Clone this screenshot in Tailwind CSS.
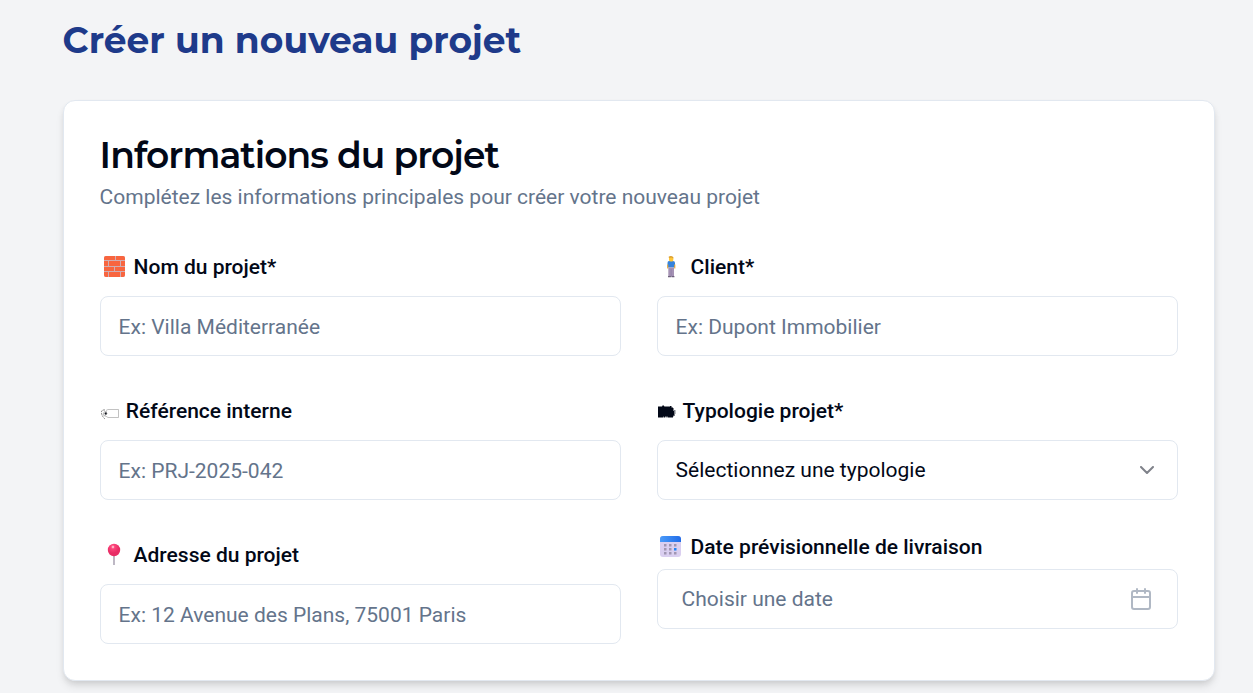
<!DOCTYPE html>
<html lang="fr">
<head>
<meta charset="utf-8">
<title>Créer un nouveau projet</title>
<script src="https://cdn.jsdelivr.net/npm/@tailwindcss/browser@4"></script>
</head>
<body class="h-[693px] overflow-hidden bg-[#f3f4f6] px-[62.6px] font-[Roboto,sans-serif] text-[21px] text-[#020817]">
<h1 class="pt-[13px] whitespace-nowrap font-[Montserrat,Inter,sans-serif] text-[36px] font-bold leading-[54px] text-[#1e3a8a]">Créer un nouveau projet</h1>
<main class="mt-[33px] h-[581px] w-[1152px] rounded-xl border border-[#e2e8f0] bg-white p-9 shadow-[0_6px_9px_-1px_rgba(0,0,0,0.1),0_3px_6px_-2px_rgba(0,0,0,0.1)]">
<h2 class="whitespace-nowrap font-[Montserrat,Inter,sans-serif] text-[36px] font-semibold leading-9 tracking-[-0.025em]">Informations du projet</h2>
<p class="mt-[9px] leading-[30px] text-[#64748b]">Complétez les informations principales pour créer votre nouveau projet</p>
<form class="mt-9 grid grid-cols-2 gap-9">
<div class="flex flex-col gap-3">
<label class="flex h-9 items-center font-medium"><svg class="ml-[3px] mr-2 size-[23px]" viewBox="0 0 23 23"><rect x="1" y="1" width="21" height="21" rx="2" fill="#d0adb2"/><g fill="#f8653f"><path d="M3 1h9v4H1V3q0-2 2-2M13 1h7q2 0 2 2v2h-9zM1 6h4v5H1zM6 6h11v5H6zM18 6h4v5h-4zM1 12h10v4H1zM12 12h10v4H12zM1 17h4v5H3q-2 0-2-2zM6 17h11v5H6zM18 17h4v3q0 2-2 2h-2z"/></g></svg><span class="pt-1">Nom du projet*</span></label>
<div class="flex h-[60px] items-center rounded-lg border border-[#e2e8f0] px-[18px] pt-1 text-[#64748b]">Ex: Villa Méditerranée</div>
</div>
<div class="flex flex-col gap-3">
<label class="flex h-9 items-center font-medium"><svg class="ml-[3px] mr-2 size-[23px]" viewBox="0 0 23 23"><path d="M7.5 8Q7.5 6 9 6h4q2 0 2 2v4.5h-7.5z" fill="#3482dc"/><path d="M7.7 9.5v4M14.8 9.5v4" stroke="#edaa35" stroke-width="1.1"/><path d="M8.3 12.5h5.7v9H8.3z" fill="#a592b4"/><path d="M11.15 14v7.5" stroke="#8573a0" stroke-width=".5"/><path d="M8 21h2.9v1.2H8M11.5 21h2.9v1.2h-2.9" fill="#6d607b"/><rect x="9" y="1.5" width="4.3" height="5" rx="1.5" fill="#ffc636"/><path d="M8.8 3V1.5L11 1l2.3 1v1.5l-2-1z" fill="#d99e35"/></svg><span class="pt-1">Client*</span></label>
<div class="flex h-[60px] items-center rounded-lg border border-[#e2e8f0] px-[18px] pt-1 text-[#64748b]">Ex: Dupont Immobilier</div>
</div>
<div class="flex flex-col gap-3">
<label class="flex h-9 items-center font-medium"><svg class="mr-[7.2px] mt-[7px] h-3 w-[19px]" viewBox="0 0 19 12" fill="none" stroke="#999"><path d="M6 2.500 8 1.500h10.500v8H8L5.500 8" stroke-width=".6"/><path d="M5 2Q1 1.500 1.500 5t3.500 6" stroke="#777" stroke-width=".9" stroke-dasharray="2 .7"/><path d="M7 4Q4 2.500 3.500 5.500T6 8" stroke-width=".7"/><circle cx="5.800" cy="5.500" r="1" fill="#020817" stroke="#444" stroke-width=".6"/></svg><span class="pt-1">Référence interne</span></label>
<div class="flex h-[60px] items-center rounded-lg border border-[#e2e8f0] px-[18px] pt-1 text-[#64748b]">Ex: PRJ-2025-042</div>
</div>
<div class="flex flex-col gap-3">
<label class="flex h-9 items-center font-medium"><svg class="ml-px mr-[7px] mt-0.5 h-[14px] w-[18px]" viewBox="0 0 18 14" fill="#020817"><path d="M0 2.500h4l1-1.500 1.500 1.500H12V2h1.500v1.500H15v1h1v1h-1v1h2.500v1H16v1h1.500v1H16v1h1v1h-1.500v1H15v1H9.500v-1h-1v1H7.700v-1H7v1H5.500v-1H5v1H0z"/></svg><span class="pt-1">Typologie projet*</span></label>
<div class="flex h-[60px] items-center justify-between rounded-lg border border-[#e2e8f0] px-[18px]"><span class="pt-0.5">Sélectionnez une typologie</span><svg class="size-6 opacity-50" viewBox="0 0 24 24" fill="none" stroke="currentColor" stroke-width="2" stroke-linecap="round" stroke-linejoin="round"><path d="m6 9 6 6 6-6"/></svg></div>
</div>
<div class="flex flex-col gap-3">
<label class="flex h-9 items-center font-medium"><svg class="ml-[3px] mr-2 size-[23px]" viewBox="0 0 23 23"><defs><radialGradient id="pin" cx=".4" cy=".25"><stop stop-color="#ff86a2"/><stop offset=".35" stop-color="#fc447a"/><stop offset="1" stop-color="#e82c65"/></radialGradient></defs><path d="M11 11v11" stroke="#a29aac" stroke-width="1.4"/><circle cx="11" cy="7" r="6.2" fill="url(#pin)"/><circle cx="10" cy="4" r="1.2" fill="#ffb1c3"/></svg><span class="pt-1">Adresse du projet</span></label>
<div class="flex h-[60px] items-center rounded-lg border border-[#e2e8f0] px-[18px] pt-1 text-[#64748b]">Ex: 12 Avenue des Plans, 75001 Paris</div>
</div>
<div class="flex flex-col gap-3">
<label class="flex h-[21px] items-center font-medium"><svg class="ml-[2px] mr-[9px] size-[23px]" viewBox="0 0 23 23"><defs><linearGradient id="cal"><stop stop-color="#4a9bf9"/><stop offset="1" stop-color="#216ce8"/></linearGradient></defs><rect x="1" y="1" width="21" height="21" rx="3" fill="#dacff0"/><path d="M1 7V4q0-3 3-3h15q3 0 3 3v3z" fill="url(#cal)"/><g fill="#a096b2"><path d="M5 9h2.500v2.500H5zM10 9h2.500v2.500H10zM15 9h2.500v2.500H15zM5 13h2.500v2.500H5zM10 13h2.500v2.500H10zM5 17h2.500v2.500H5zM10 17h2.500v2.500H10zM15 17h2.500v2.500H15z"/></g><path d="M15 13h2.500v2.500H15z" fill="#2383f3"/></svg><span class="pt-0.5">Date prévisionnelle de livraison</span></label>
<div class="flex h-[60px] items-center justify-between rounded-lg border border-[#e2e8f0] px-6 text-[#64748b]"><span class="pt-0.5">Choisir une date</span><svg class="size-6 opacity-50" viewBox="0 0 24 24" fill="none" stroke="currentColor" stroke-width="2" stroke-linecap="round" stroke-linejoin="round"><path d="M8 2v4M16 2v4M3 10h18"/><rect x="3" y="4" width="18" height="18" rx="2"/></svg></div>
</div>
</form>
</main>
</body>
</html>
